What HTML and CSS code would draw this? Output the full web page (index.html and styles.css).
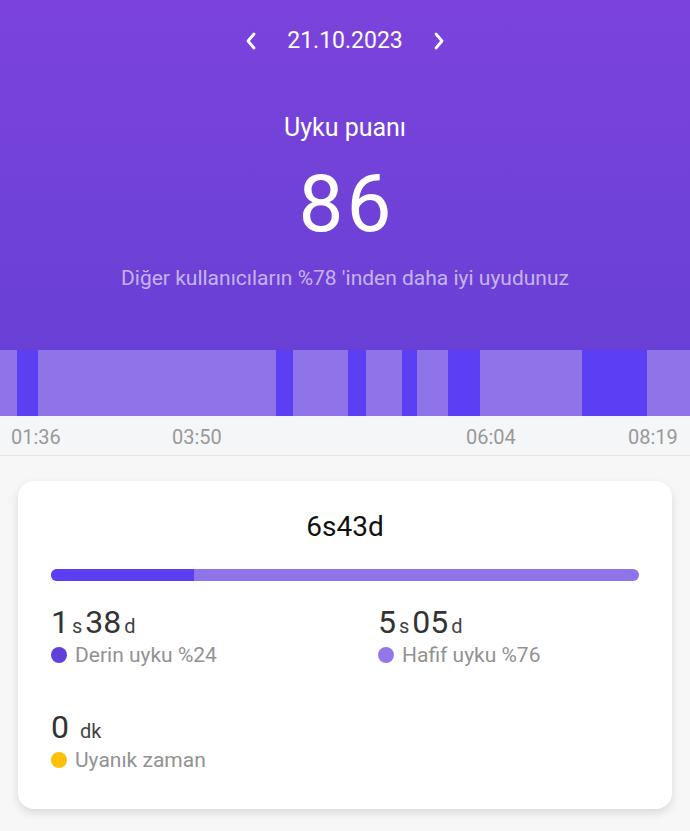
FILE: index.html
```html
<!DOCTYPE html>
<html>
<head>
    <meta charset="utf-8">
    <link rel="stylesheet" href="styles.css">
</head>
<body>
    <header class="top">
        <div class="date-nav">
            <svg class="chev" width="12" height="18" viewBox="0 0 12 18"><polyline points="9,2 3,9 9,16" /></svg>
            <span class="date">21.10.2023</span>
            <svg class="chev" width="12" height="18" viewBox="0 0 12 18"><polyline points="3,2 9,9 3,16" /></svg>
        </div>
        <div class="score-title">Uyku puanı</div>
        <div class="score">86</div>
        <div class="score-note">Diğer kullanıcıların %78 'inden daha iyi uyudunuz</div>
    </header>

    <div class="chart">
        <div class="seg light" style="width: 17px"></div>
        <div class="seg deep" style="width: 21px"></div>
        <div class="seg light" style="width: 238px"></div>
        <div class="seg deep" style="width: 17px"></div>
        <div class="seg light" style="width: 55px"></div>
        <div class="seg deep" style="width: 18px"></div>
        <div class="seg light" style="width: 36px"></div>
        <div class="seg deep" style="width: 15px"></div>
        <div class="seg light" style="width: 31px"></div>
        <div class="seg deep" style="width: 32px"></div>
        <div class="seg light" style="width: 102px"></div>
        <div class="seg deep" style="width: 65px"></div>
        <div class="seg light" style="width: 43px"></div>
    </div>
    <div class="axis">
        <span class="tick" style="left: 11px">01:36</span>
        <span class="tick" style="left: 172px">03:50</span>
        <span class="tick" style="left: 466px">06:04</span>
        <span class="tick" style="left: 628px">08:19</span>
    </div>

    <main class="content">
        <div class="card">
            <div class="total">6s43d</div>
            <div class="ratio">
                <div class="ratio-deep" style="width: 24.3%"></div>
            </div>
            <div class="stats">
                <div class="stat">
                    <div class="value">1<span class="unit">s</span>38<span class="unit">d</span></div>
                    <div class="label"><span class="dot dot-deep"></span>Derin uyku %24</div>
                </div>
                <div class="stat">
                    <div class="value">5<span class="unit">s</span>05<span class="unit">d</span></div>
                    <div class="label"><span class="dot dot-light"></span>Hafif uyku %76</div>
                </div>
                <div class="stat">
                    <div class="value">0 <span class="unit">dk</span></div>
                    <div class="label"><span class="dot dot-awake"></span>Uyanık zaman</div>
                </div>
            </div>
        </div>
    </main>
</body>
</html>
```

FILE: styles.css
```css
* {
    box-sizing: border-box;
}

html, body {
    margin: 0;
    padding: 0;
    font-family: Roboto, "Liberation Sans", Arial, sans-serif;
    background-color: #f7f7f7;
    color: #333;
}

.top {
    background: linear-gradient(to bottom, #7b43dc, #6940d5);
    color: #fff;
    text-align: center;
    padding: 27px 0 60px;
}

.date-nav {
    display: flex;
    justify-content: center;
    align-items: center;
    gap: 30px;
    height: 28px;
}

.chev {
    display: block;
}

.chev polyline {
    fill: none;
    stroke: #fff;
    stroke-width: 2.8;
    stroke-linecap: round;
    stroke-linejoin: round;
}

.date {
    font-size: 23px;
    line-height: 28px;
}

.score-title {
    margin-top: 58px;
    font-size: 25px;
    line-height: 30px;
}

.score {
    margin-top: 16px;
    padding-left: 3px;
    font-size: 80px;
    line-height: 90px;
    letter-spacing: 3px;
}

.score-note {
    margin-top: 17px;
    font-size: 21px;
    line-height: 24px;
    color: rgba(255, 255, 255, 0.62);
}

.chart {
    display: flex;
    height: 66px;
}

.seg {
    flex: none;
    height: 100%;
}

.seg.light {
    background-color: #8f74e9;
}

.seg.deep {
    background-color: #5c3ff3;
}

.axis {
    position: relative;
    height: 40px;
    background-color: #f5f6f8;
    border-bottom: 1px solid #e4e4e6;
}

.tick {
    position: absolute;
    top: 9px;
    font-size: 20px;
    line-height: 24px;
    color: #999;
}

.content {
    padding: 25px 18px 22px;
}

.card {
    background-color: #fff;
    border-radius: 16px;
    box-shadow: 0 4px 10px rgba(0, 0, 0, 0.12);
    padding: 30px 33px 37px;
}

.total {
    text-align: center;
    font-size: 28px;
    line-height: 32px;
    color: #111;
}

.ratio {
    margin-top: 26px;
    height: 12px;
    border-radius: 6px;
    background-color: #8f74e9;
    overflow: hidden;
}

.ratio-deep {
    height: 100%;
    background-color: #5c3ff3;
}

.stats {
    display: grid;
    grid-template-columns: 327px 1fr;
    row-gap: 40px;
    margin-top: 21px;
}

.value {
    font-size: 32px;
    line-height: 40px;
    color: #333;
}

.unit {
    font-size: 20px;
    line-height: 1;
    margin: 0 3px;
    color: #444;
}

.label {
    display: flex;
    align-items: center;
    margin-top: 1px;
    font-size: 21px;
    line-height: 24px;
    color: #929292;
}

.dot {
    width: 16px;
    height: 16px;
    border-radius: 50%;
    margin-right: 8px;
    flex: none;
}

.dot-deep {
    background-color: #6040d8;
}

.dot-light {
    background-color: #9377e9;
}

.dot-awake {
    background-color: #fcc00c;
}
```
